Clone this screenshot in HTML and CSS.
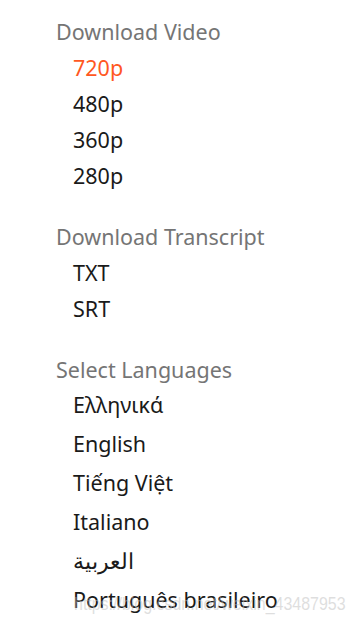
FILE: index.html
```html
<!DOCTYPE html>
<html>
<head>
<meta charset="utf-8">
<link rel="stylesheet" href="styles.css">
</head>
<body>
<div class="menu">
  <div class="group">
    <div class="title">Download Video</div>
    <div class="item active">720p</div>
    <div class="item">480p</div>
    <div class="item">360p</div>
    <div class="item">280p</div>
  </div>
  <div class="group">
    <div class="title">Download Transcript</div>
    <div class="item">TXT</div>
    <div class="item">SRT</div>
  </div>
  <div class="group langs">
    <div class="title">Select Languages</div>
    <div class="item">Ελληνικά</div>
    <div class="item">English</div>
    <div class="item">Tiếng Việt</div>
    <div class="item">Italiano</div>
    <div class="item"><span dir="rtl">العربية</span></div>
    <div class="item">Português brasileiro</div>
  </div>
</div>
<div class="watermark">https://blog.csdn.net/weixin_43487953</div>
</body>
</html>
```
FILE: styles.css
```css
html, body {
  margin: 0;
  padding: 0;
  background: #ffffff;
}
body {
  width: 353px;
  height: 624px;
  overflow: hidden;
  position: relative;
  font-family: "Noto Sans", "Open Sans", sans-serif;
}
.menu {
  padding: 17px 0 0 56px;
  display: flex;
  flex-direction: column;
  gap: 28px;
}
.group {
  display: flex;
  flex-direction: column;
}
.title {
  font-size: 21.5px;
  line-height: 30px;
  color: #757575;
  margin-bottom: 3px;
}
.langs .title {
  margin-bottom: 0;
}
.item {
  font-size: 21.5px;
  line-height: 36px;
  color: #1a1a1a;
  padding-left: 17px;
}
.langs .item {
  line-height: 39px;
}
.active {
  color: #ff5722;
}
.watermark {
  position: absolute;
  left: 74px;
  top: 592px;
  font-family: "Liberation Sans", Arial, sans-serif;
  font-size: 19px;
  line-height: 24px;
  color: rgba(190, 190, 190, 0.5);
  white-space: nowrap;
  transform: scaleX(0.84);
  transform-origin: left center;
}
```
